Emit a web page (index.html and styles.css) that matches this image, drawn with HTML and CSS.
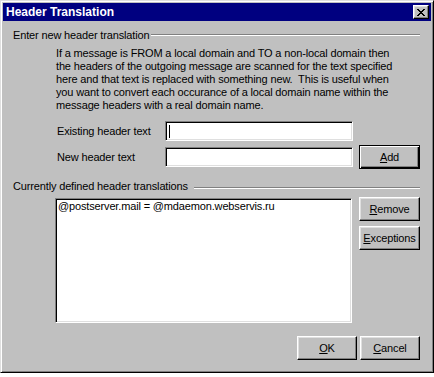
FILE: index.html
```html
<!DOCTYPE html>
<html lang="en">
<head>
  <meta charset="UTF-8" />
  <title>Header Translation</title>
  <link rel="stylesheet" href="styles.css">
</head>
<body>
  <div class="window">
    <div class="titlebar">
      <span class="title">Header Translation</span>
      <button class="close" aria-label="Close">
        <svg width="8" height="7" viewBox="0 0 8 7" shape-rendering="crispEdges">
          <path fill="#000" d="M0 0h2v1H0zM6 0h2v1H6zM1 1h2v1H1zM5 1h2v1H5zM2 2h4v1H2zM3 3h2v1H3zM2 4h4v1H2zM1 5h2v1H1zM5 5h2v1H5zM0 6h2v1H0zM6 6h2v1H6z"/>
        </svg>
      </button>
    </div>

    <div class="content">
      <div class="group-head">
        <span>Enter new header translation</span>
        <div class="etch"></div>
      </div>

      <p class="info">
        If a message is FROM a local domain and TO a non-local domain then<br>
        the headers of the outgoing message are scanned for the text specified<br>
        here and that text is replaced with something new.&nbsp; This is useful when<br>
        you want to convert each occurance of a local domain name within the<br>
        message headers with a real domain name.
      </p>

      <div class="field-row">
        <label class="field-label">Existing header text</label>
        <div class="edit"><span class="caret"></span></div>
      </div>
      <div class="field-row second">
        <label class="field-label">New header text</label>
        <div class="edit"></div>
        <button class="btn default add"><u>A</u>dd</button>
      </div>

      <div class="group-head lower">
        <span>Currently defined header translations</span>
        <div class="etch"></div>
      </div>

      <div class="list-row">
        <div class="listbox">
          <div class="list-item">@postserver.mail = @mdaemon.webservis.ru</div>
        </div>
        <div class="side-buttons">
          <button class="btn"><u>R</u>emove</button>
          <button class="btn"><u>E</u>xceptions</button>
        </div>
      </div>

      <div class="footer">
        <button class="btn small"><u>O</u>K</button>
        <button class="btn small"><u>C</u>ancel</button>
      </div>
    </div>
  </div>
</body>
</html>
```

FILE: styles.css
```css
html, body {
  margin: 0;
  padding: 0;
}

body {
  background: #fff;
  font-family: "Liberation Sans", Arial, sans-serif;
  font-size: 11px;
  color: #000;
}

.window {
  width: 434px;
  height: 373px;
  box-sizing: border-box;
  background: #c0c0c0;
  border: 1px solid;
  border-color: #dfdfdf #000 #000 #dfdfdf;
  box-shadow: inset 1px 1px #fff, inset -1px -1px #808080;
  padding: 2px;
}

.titlebar {
  height: 18px;
  background: #000080;
  color: #fff;
  display: flex;
  align-items: center;
  justify-content: space-between;
  padding: 0 2px 0 3px;
}

.title {
  font-weight: bold;
  font-size: 12px;
}

.close {
  width: 16px;
  height: 14px;
  padding: 0;
  display: flex;
  align-items: center;
  justify-content: center;
  background: #c0c0c0;
  border: 1px solid;
  border-color: #fff #000 #000 #fff;
  box-shadow: inset -1px -1px #808080, inset 1px 1px #dfdfdf;
}

.content {
  padding: 8px 11px 0 10px;
  letter-spacing: -0.15px;
}

.group-head {
  display: flex;
  align-items: center;
  height: 13px;
  line-height: 13px;
  white-space: nowrap;
}

.group-head .etch {
  flex: 1;
  margin-left: 2px;
  margin-top: -1px;
  border-top: 1px solid #808080;
  border-bottom: 1px solid #fff;
}

.group-head.lower {
  margin-top: 13px;
}

.group-head.lower .etch {
  margin-left: 6px;
  margin-top: 2px;
}

.info {
  margin: 5px 0 0 43px;
  line-height: 13px;
  white-space: nowrap;
}

.field-row {
  display: flex;
  align-items: center;
  height: 20px;
  margin-top: 9px;
}

.field-row.second {
  margin-top: 6px;
}

.field-label {
  width: 108px;
  margin-left: 44px;
}

.edit {
  width: 188px;
  height: 20px;
  box-sizing: border-box;
  background: #fff;
  border: 1px solid;
  border-color: #808080 #fff #fff #808080;
  box-shadow: inset 1px 1px #000, inset -1px -1px #dfdfdf;
  padding: 3px 0 0 3px;
}

.caret {
  display: block;
  width: 1px;
  height: 13px;
  background: #000;
}

.btn {
  width: 61px;
  height: 24px;
  padding: 0;
  font: inherit;
  letter-spacing: inherit;
  color: #000;
  background: #c0c0c0;
  border: 1px solid;
  border-color: #fff #000 #000 #fff;
  box-shadow: inset -1px -1px #808080, inset 1px 1px #dfdfdf;
}

.btn.default {
  border-color: #000;
  box-shadow: inset 1px 1px #fff, inset -1px -1px #000, inset -2px -2px #808080;
}

.add {
  margin-left: auto;
}

.list-row {
  display: flex;
  align-items: flex-start;
  margin-top: 5px;
}

.listbox {
  width: 297px;
  height: 125px;
  box-sizing: border-box;
  margin-left: 42px;
  background: #fff;
  border: 1px solid;
  border-color: #808080 #fff #fff #808080;
  box-shadow: inset 1px 1px #000, inset -1px -1px #dfdfdf;
  padding: 1px 2px;
}

.list-item {
  line-height: 13px;
  white-space: nowrap;
}

.side-buttons {
  margin-left: auto;
  margin-top: -1px;
  display: flex;
  flex-direction: column;
  gap: 5px;
}

.footer {
  display: flex;
  justify-content: flex-end;
  gap: 3px;
  margin-top: 13px;
}

.btn.small {
  width: 60px;
}
```
